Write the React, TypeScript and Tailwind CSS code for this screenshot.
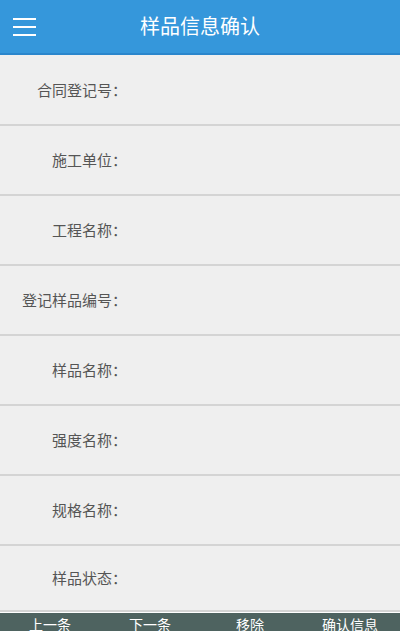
import React from "react";

const labels = [
  "合同登记号：",
  "施工单位：",
  "工程名称：",
  "登记样品编号：",
  "样品名称：",
  "强度名称：",
  "规格名称：",
  "样品状态：",
];

const actions = ["上一条", "下一条", "移除", "确认信息"];

export default function App() {
  const font = { fontFamily: '"Noto Sans CJK SC", "Noto Sans", sans-serif' };
  return (
    <div className="w-[400px] h-[631px] overflow-hidden bg-[#efefef] flex flex-col" style={font}>
      <div className="h-[55px] shrink-0 bg-[#3597db] border-b-[2px] border-[#2a86cc] relative flex items-center justify-center">
        <div className="absolute left-[13px] top-[18px] flex flex-col gap-[6px]">
          <div className="w-[23px] h-[2px] bg-white" />
          <div className="w-[23px] h-[2px] bg-white" />
          <div className="w-[23px] h-[2px] bg-white" />
        </div>
        <span className="text-white text-[20px] leading-[28px] -mt-[1px]">样品信息确认</span>
      </div>
      <div className="h-[1px] bg-[#cfe6f7] shrink-0 -mt-[1px]" />
      {labels.map((l, i) => (
        <div
          key={l}
          className={`shrink-0 flex items-center border-b-[2px] border-[#d4d4d4] ${
            i === 0 ? "h-[71px]" : i === labels.length - 1 ? "h-[66px] border-b-0" : "h-[70px]"
          }`}
        >
          <div className="w-[127px] text-right text-[15px] text-[#555555] leading-[20px]">{l}</div>
        </div>
      ))}
      <div className="h-[1px] bg-white shrink-0" />
      <div className="h-[50px] shrink-0 bg-[#4e6360] grid grid-cols-4">
        {actions.map((a) => (
          <div key={a} className="text-center text-white text-[14px] leading-[20px] pt-[1px]">
            {a}
          </div>
        ))}
      </div>
    </div>
  );
}
